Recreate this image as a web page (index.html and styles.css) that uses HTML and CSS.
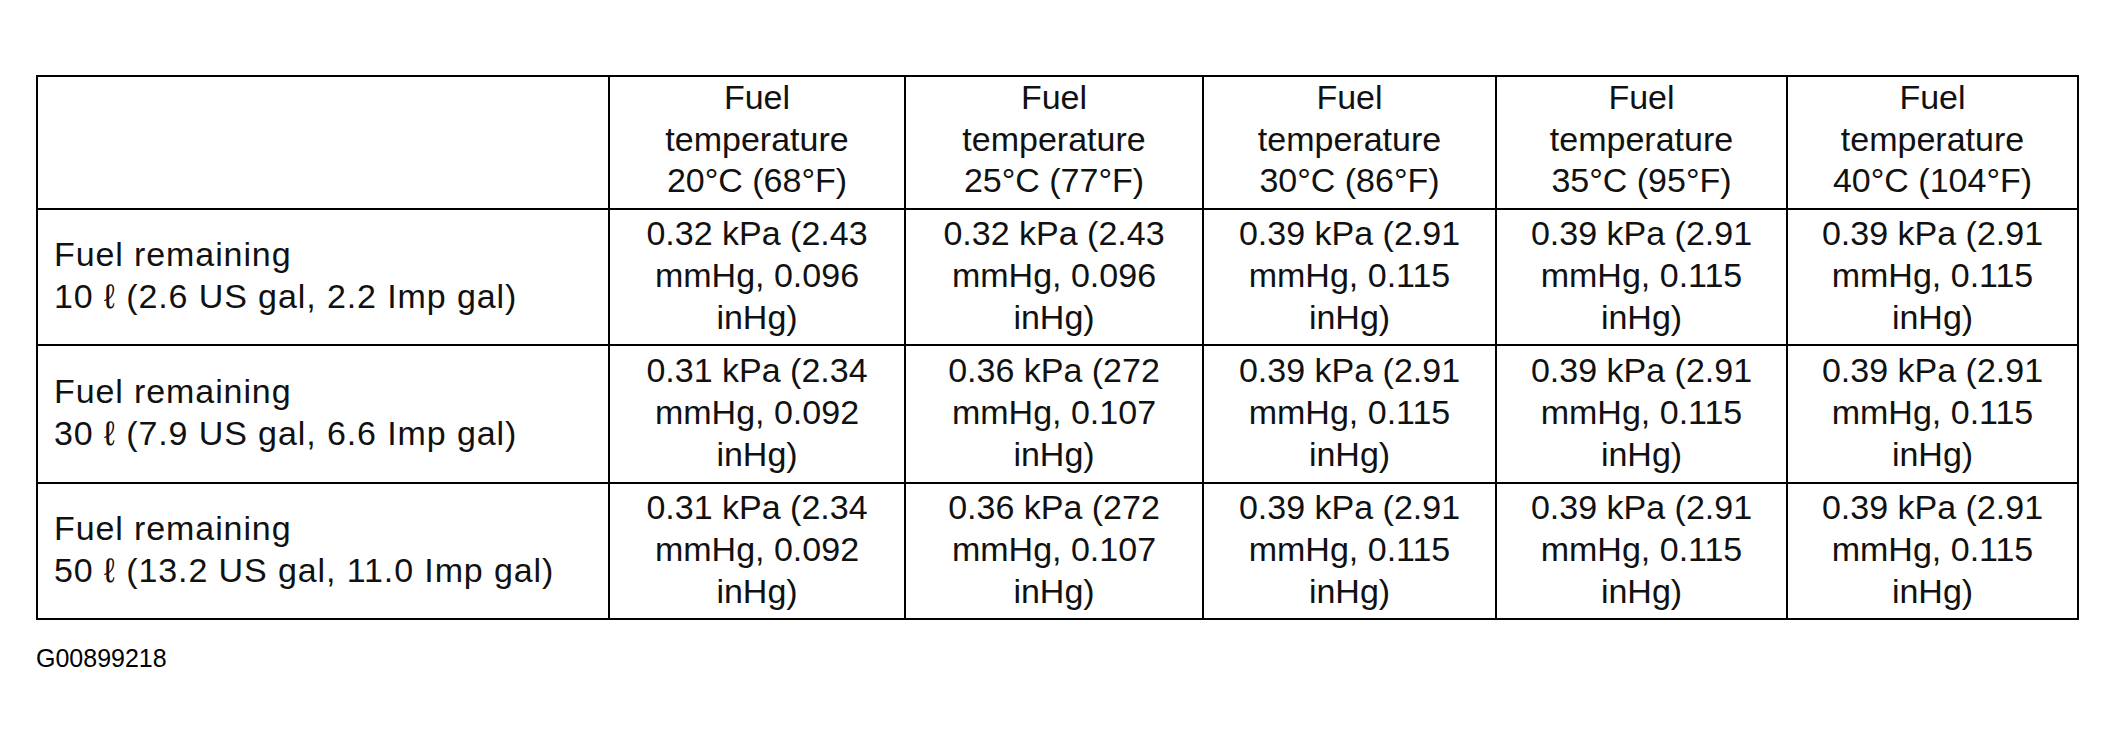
FILE: index.html
```html
<!DOCTYPE html>
<html>
<head>
<meta charset="utf-8">
<link rel="stylesheet" href="styles.css">
</head>
<body>
<div class="page">
  <table class="spec">
    <colgroup>
      <col class="c-label">
      <col class="c1">
      <col class="c2">
      <col class="c3">
      <col class="c4">
      <col class="c5">
    </colgroup>
    <tr class="r-head">
      <td class="label"></td>
      <td>Fuel<br>temperature<br>20°C (68°F)</td>
      <td>Fuel<br>temperature<br>25°C (77°F)</td>
      <td>Fuel<br>temperature<br>30°C (86°F)</td>
      <td>Fuel<br>temperature<br>35°C (95°F)</td>
      <td>Fuel<br>temperature<br>40°C (104°F)</td>
    </tr>
    <tr class="r1">
      <td class="label">Fuel remaining<br>10 ℓ (2.6 US gal, 2.2 Imp gal)</td>
      <td>0.32 kPa (2.43<br>mmHg, 0.096<br>inHg)</td>
      <td>0.32 kPa (2.43<br>mmHg, 0.096<br>inHg)</td>
      <td>0.39 kPa (2.91<br>mmHg, 0.115<br>inHg)</td>
      <td>0.39 kPa (2.91<br>mmHg, 0.115<br>inHg)</td>
      <td>0.39 kPa (2.91<br>mmHg, 0.115<br>inHg)</td>
    </tr>
    <tr class="r2">
      <td class="label">Fuel remaining<br>30 ℓ (7.9 US gal, 6.6 Imp gal)</td>
      <td>0.31 kPa (2.34<br>mmHg, 0.092<br>inHg)</td>
      <td>0.36 kPa (272<br>mmHg, 0.107<br>inHg)</td>
      <td>0.39 kPa (2.91<br>mmHg, 0.115<br>inHg)</td>
      <td>0.39 kPa (2.91<br>mmHg, 0.115<br>inHg)</td>
      <td>0.39 kPa (2.91<br>mmHg, 0.115<br>inHg)</td>
    </tr>
    <tr class="r3">
      <td class="label">Fuel remaining<br>50 ℓ (13.2 US gal, 11.0 Imp gal)</td>
      <td>0.31 kPa (2.34<br>mmHg, 0.092<br>inHg)</td>
      <td>0.36 kPa (272<br>mmHg, 0.107<br>inHg)</td>
      <td>0.39 kPa (2.91<br>mmHg, 0.115<br>inHg)</td>
      <td>0.39 kPa (2.91<br>mmHg, 0.115<br>inHg)</td>
      <td>0.39 kPa (2.91<br>mmHg, 0.115<br>inHg)</td>
    </tr>
  </table>
  <div class="figid">G00899218</div>
</div>
</body>
</html>
```

FILE: styles.css
```css
html, body {
  margin: 0;
  padding: 0;
  background: #fff;
}

.page {
  padding: 75px 0 0 36px;
  font-family: "Liberation Sans", Arial, "DejaVu Sans", sans-serif;
  color: #111;
}

.spec {
  border-collapse: collapse;
  table-layout: fixed;
  width: 2041px;
  font-size: 34px;
  line-height: 42px;
}

.c-label { width: 572px; }
.c1 { width: 296px; }
.c2 { width: 298px; }
.c3 { width: 293px; }
.c4 { width: 291px; }
.c5 { width: 291px; }

.spec td {
  border: 2px solid #000;
  padding: 0 0 3px 0;
  text-align: center;
  vertical-align: middle;
  white-space: nowrap;
}

.spec td.label {
  text-align: left;
  padding-left: 16px;
  letter-spacing: 0.9px;
}

.r-head td {
  line-height: 41.5px;
  padding-bottom: 6px;
}

.r-head { height: 132px; }
.r1 { height: 136px; }
.r2 { height: 138px; }
.r3 { height: 136px; }

.figid {
  margin-top: 23px;
  font-size: 25px;
  line-height: 30px;
  color: #000;
}
```
